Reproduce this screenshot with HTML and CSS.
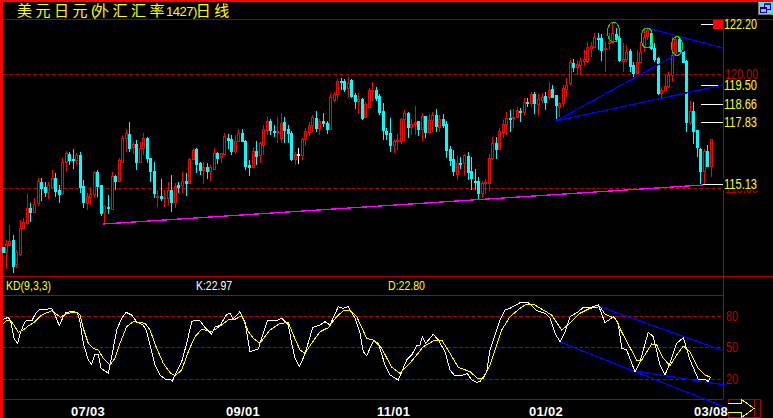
FILE: index.html
```html
<!DOCTYPE html>
<html lang="zh">
<head>
  <meta charset="UTF-8">
  <title>美元日元 日线</title>
  <link rel="stylesheet" href="styles.css">
</head>
<body>

<div class="window">
  <div class="title-bar">
    <span class="title">美元日元<span class="title-paren">(</span>外汇汇率<span class="title-num">1427)</span>日线</span>
    <svg class="restore-btn" width="15" height="13" viewBox="0 0 15 13">
      <rect x="0" y="0" width="15" height="13" fill="#00ffff"/>
      <rect x="0" y="1" width="14" height="12" fill="#6f7f3f"/>
      <rect x="1" y="1" width="13" height="11" fill="#a8b8c8"/>
      <rect x="6.5" y="1.5" width="6" height="6" fill="none" stroke="#0000c0"/>
      <rect x="6" y="1" width="7" height="2" fill="#0000c0"/>
      <rect x="2.5" y="5.5" width="6" height="5" fill="#a8b8c8" stroke="#0000c0"/>
      <rect x="2" y="5" width="7" height="2" fill="#0000c0"/>
    </svg>
  </div>

  <svg class="chart" width="770" height="398" viewBox="3 20 770 398">
    <!-- 网格 -->
    <g class="grid">
      <line class="solid" x1="3" y1="276.5" x2="773" y2="276.5"/>
      <line class="solid" x1="3" y1="295.5" x2="723" y2="295.5"/>
      <line class="solid" x1="3" y1="399.5" x2="723" y2="399.5"/>
      <line class="solid" x1="723.5" y1="20" x2="723.5" y2="399"/>
      <line class="dash" x1="3" y1="74.5" x2="723" y2="74.5"/>
      <line class="dash" x1="3" y1="188.5" x2="723" y2="188.5"/>
      <line class="dash" x1="3" y1="316.5" x2="723" y2="316.5"/>
      <line class="dash" x1="3" y1="347.5" x2="723" y2="347.5"/>
      <line class="dash" x1="3" y1="379.5" x2="723" y2="379.5"/>
    </g>

    <g id="candles"></g>

    <!-- 价位线 -->
    <rect x="713" y="20" width="10" height="9" fill="#ff0000"/>
    <g class="marks">
      <line x1="701" y1="24.5" x2="713" y2="24.5"/>
      <line x1="701" y1="85.5" x2="723" y2="85.5"/>
      <line x1="701" y1="104.5" x2="723" y2="104.5"/>
      <line x1="701" y1="122.5" x2="723" y2="122.5"/>
      <line x1="701" y1="184.5" x2="723" y2="184.5"/>
    </g>

    <line class="trend-pink" x1="103" y1="224" x2="703" y2="185"/>
    <g class="trend-blue">
      <line x1="556" y1="121" x2="685" y2="50"/>
      <line x1="556" y1="121" x2="723" y2="85"/>
      <line x1="647" y1="28" x2="723" y2="48"/>
      <line x1="560" y1="342" x2="727" y2="408"/>
      <line x1="598" y1="306" x2="724" y2="351"/>
      <line x1="635" y1="371" x2="725" y2="385"/>
    </g>
    <g class="rings">
      <ellipse cx="613.5" cy="32" rx="6" ry="10"/>
      <ellipse cx="647" cy="38" rx="6" ry="10"/>
      <ellipse cx="677" cy="46" rx="5.5" ry="9.5"/>
    </g>

    <polyline id="kd-k" class="kd-white" points=""/>
    <polyline id="kd-d" class="kd-yellow" points=""/>

    <!-- 右侧刻度, 原图字体偏窄, 用 textLength 压一下 -->
    <g class="scale">
      <text class="dim" x="725" y="79" textLength="33" lengthAdjust="spacingAndGlyphs">120.00</text>
      <text class="dim" x="725" y="193" textLength="33" lengthAdjust="spacingAndGlyphs">115.00</text>
      <rect x="723" y="179" width="47" height="11" fill="#000"/>
      <text x="724" y="29" textLength="33" lengthAdjust="spacingAndGlyphs">122.20</text>
      <text x="724" y="90" textLength="33" lengthAdjust="spacingAndGlyphs">119.50</text>
      <text x="724" y="109" textLength="33" lengthAdjust="spacingAndGlyphs">118.66</text>
      <text x="724" y="127" textLength="33" lengthAdjust="spacingAndGlyphs">117.83</text>
      <text x="724" y="189" textLength="33" lengthAdjust="spacingAndGlyphs">115.13</text>
      <text class="dim" x="726" y="321" textLength="12" lengthAdjust="spacingAndGlyphs">80</text>
      <text class="dim" x="726" y="352" textLength="12" lengthAdjust="spacingAndGlyphs">50</text>
      <text class="dim" x="726" y="384" textLength="12" lengthAdjust="spacingAndGlyphs">20</text>
    </g>

    <g class="legend">
      <text class="yellow" x="6" y="290" textLength="45" lengthAdjust="spacingAndGlyphs">KD(9,3,3)</text>
      <text class="white" x="196" y="290" textLength="36" lengthAdjust="spacingAndGlyphs">K:22.97</text>
      <text class="yellow" x="388" y="290" textLength="37" lengthAdjust="spacingAndGlyphs">D:22.80</text>
    </g>

    <g class="dates">
      <text x="71" y="416">07/03</text>
      <text x="226" y="416">09/01</text>
      <text x="377" y="416">11/01</text>
      <text x="529" y="416">01/02</text>
      <text x="694" y="416">03/08</text>
    </g>

    <!-- 右移按钮 -->
    <g class="arrow-btn">
      <rect x="728.5" y="399.5" width="32" height="18"/>
      <line x1="754.5" y1="399" x2="754.5" y2="418"/>
      <polyline points="728,403.5 741.5,403.5 741.5,399.5 754,408.5 741.5,417.5 741.5,412.5 728,412.5"/>
    </g>
  </svg>
</div>

<script src="chart.js"></script>
</body>
</html>
```

FILE: styles.css
```css
* {
  margin: 0;
  padding: 0;
  box-sizing: border-box;
}

body {
  background: #000;
  width: 773px;
  height: 418px;
  overflow: hidden;
}

.window {
  display: flex;
  flex-direction: column;
  height: 418px;
  border-top: 2px solid #ff0000;
  border-left: 3px solid #ff0000;
}

.title-bar {
  display: flex;
  justify-content: space-between;
  align-items: flex-start;
  height: 18px;
  flex: none;
  padding-left: 14px;
  border-bottom: 1px solid #a00000;
}

.title {
  color: #ffff00;
  font-family: "Noto Sans CJK SC", "DejaVu Sans", sans-serif;
  font-size: 15px;
  line-height: 15px;
  letter-spacing: 3.5px;
  white-space: nowrap;
}

.title-paren {
  font-family: "Liberation Sans", sans-serif;
  letter-spacing: -2px;
}

.title-num {
  margin-left: -2px;
  margin-right: -1px;
  font-family: "Liberation Sans", sans-serif;
  font-size: 13px;
  letter-spacing: -0.5px;
}

.restore-btn {
  display: block;
}

.chart {
  display: block;
  flex: none;
  overflow: visible;
  shape-rendering: crispEdges;
}

.chart text {
  font-family: "Liberation Sans", Arial, sans-serif;
  shape-rendering: auto;
}

.grid line {
  stroke: #b00000;
  stroke-width: 1;
}

.grid .dash {
  stroke-dasharray: 4 2;
}

.marks line {
  stroke: #ffffff;
  stroke-width: 1;
}

.trend-pink {
  stroke: #ff00ff;
  stroke-width: 1.3;
}

.trend-blue line {
  stroke: #0000ff;
  stroke-width: 1.3;
}

.rings ellipse {
  fill: none;
  stroke: #00e000;
  stroke-width: 1;
}

.kd-white,
.kd-yellow {
  fill: none;
  stroke-width: 1;
}

.kd-white {
  stroke: #ffffff;
}

.kd-yellow {
  stroke: #ffff00;
}

.scale text {
  fill: #ffff00;
  font-size: 14px;
}

.scale .dim {
  fill: #c00000;
}

.legend text {
  font-size: 13px;
}

.legend .yellow {
  fill: #ffff00;
}

.legend .white {
  fill: #ffffff;
}

.dates text {
  fill: #ffffff;
  font-size: 13px;
  font-weight: bold;
  letter-spacing: 0.3px;
}

.arrow-btn rect,
.arrow-btn line {
  fill: #000;
  stroke: #b00000;
  stroke-width: 1;
}

.arrow-btn polyline {
  fill: #000;
  stroke: #ffff00;
  stroke-width: 1;
}
```

FILE: chart.js
```js
// 蜡烛数据: [中心x, 实体上, 实体下, 影线上, 影线下]
// 数值是按3倍放大图量的, 每段有自己的原点
const CYAN = "#00ffff", RED = "#ff0000", WHITE = "#ffffff";

const segments = [
  { ox: 0, oy: 130, cyan: [
    [10,350,365,350,365],[40,330,407,315,430],[91,235,245,220,275],[124,155,173,145,212],
    [136,170,185,155,200],[166,143,182,130,200],[178,180,191,165,218],[208,72,90,65,105],
    [220,87,89,57,118],[241,75,170,65,190],[250,168,215,150,233],[292,125,168,120,200],
    [304,165,248,165,258],[325,231,232,195,252],[346,138,152,135,180],[388,12,53,-24,65],
    [409,42,95,30,120],[442,25,85,20,100],[451,85,122,85,155],[463,123,190,95,205],
    [484,198,205,148,212],[514,180,215,135,245],[535,165,170,155,190],[559,153,158,130,197],
    [589,58,102,55,130],[601,100,120,95,135],[622,110,122,100,148],[652,70,85,65,102],
    [685,25,30,12,58],[694,27,62,15,75],[727,8,33,-3,32],[736,33,107,30,120],
    [748,105,110,90,137],[769,63,77,32,105]
  ], red: [
    [19,343,365,330,418],[28,332,345,285,345],[49,365,403,360,415],[61,295,372,270,378],
    [70,277,295,265,295],[82,235,280,192,285],[103,222,245,205,250],[115,153,220,145,227],
    [145,165,185,155,206],[157,145,170,120,175],[187,97,190,85,195],[199,68,97,62,125],
    [229,75,90,70,105],[262,198,220,190,240],[271,193,200,170,225],[283,127,193,122,205],
    [313,228,245,225,283],[337,138,236,125,237],[358,91,152,85,153],[367,24,97,15,100],
    [379,10,25,-3,65],[400,42,52,35,72],[421,55,95,35,100],[430,25,55,10,75],
    [472,198,202,180,232],[493,200,204,180,232],[505,180,205,155,225],[526,167,215,160,235],
    [547,153,165,125,190],[568,88,158,85,160],[580,60,87,55,90],[610,110,120,95,163],
    [631,110,122,105,152],[643,70,116,55,120],[664,70,82,68,100],[673,18,73,10,70],
    [706,33,62,15,73],[715,10,33,-3,35],[760,63,110,50,112]
  ]},
  { ox: 260, oy: 60, cyan: [
    [30,183,210,178,225],[42,212,213,195,232],[73,186,210,170,250],[85,207,218,195,250],
    [94,220,297,213,302],[169,175,204,153,215],[190,183,190,160,200],[202,190,207,183,222],
    [244,63,64,55,90],[253,63,87,57,95],[274,60,108,57,115],[286,105,122,100,147],
    [307,118,175,113,180],[349,90,113,82,122],[358,108,155,103,165],[370,154,210,130,240],
    [379,213,222,205,240],[391,220,254,175,275],[445,160,200,155,235],[475,183,208,183,228],
    [496,168,215,168,235],[529,165,198,148,215],[550,178,196,163,205],[559,192,269,183,293],
    [571,267,300,258,318],[580,298,333,270,348],[601,310,311,290,328],[625,288,335,277,360],
    [634,333,353,292,390],[646,362,363,327,390],[655,363,398,350,418],[709,250,267,232,298],
    [751,175,176,150,215],[781,152,153,145,185],[802,125,126,113,140],[823,103,128,97,162]
  ], red: [
    [0,248,285,245,310],[9,207,255,195,285],[21,183,210,170,225],[52,212,213,170,250],
    [64,190,233,160,250],[106,283,296,275,315],[127,237,285,235,300],[136,213,238,205,257],
    [148,195,215,185,228],[157,172,195,165,215],[178,183,204,178,225],[211,111,207,103,210],
    [223,103,120,95,125],[232,63,103,57,120],[265,70,85,52,110],[295,118,122,100,162],
    [316,133,171,125,175],[328,90,140,85,145],[337,90,92,66,122],[403,243,254,238,278],
    [412,241,244,222,270],[424,178,243,173,252],[433,160,178,150,242],[454,193,200,178,225],
    [466,187,193,138,225],[487,168,208,160,243],[508,180,215,163,215],[517,166,180,156,215],
    [538,178,200,165,215],[592,310,341,288,360],[613,285,310,283,348],[667,370,398,363,415],
    [676,366,370,358,402],[688,295,368,283,392],[697,250,295,232,300],[718,214,267,205,270],
    [730,192,215,180,235],[739,175,192,156,225],[760,172,175,148,205],[772,150,172,140,175],
    [793,125,155,115,168],[814,103,128,97,140],[835,118,132,103,165]
  ], white: [
    [115,283,284,264,312]
  ]},
  { ox: 540, oy: 0, cyan: [
    [16,288,305,275,330],[37,268,290,255,295],[49,286,315,285,358],[100,190,200,178,215],
    [175,115,116,100,150],[184,113,150,103,182],[229,102,118,85,125],[238,113,180,100,185],
    [271,152,198,148,215],[280,195,218,185,230],[334,98,143,92,150],[343,143,178,130,185],
    [355,173,280,170,285],[418,118,153,112,165],[430,153,185,150,190],[439,183,365,180,395],
    [460,333,392,305,432],[472,390,441,390,471],[481,447,512,445,553],[502,453,498,435,500]
  ], red: [
    [6,290,300,280,310],[26,270,290,245,300],[58,310,320,305,350],[70,265,310,255,320],
    [79,255,268,235,290],[91,185,250,180,255],[112,193,200,180,225],[121,182,195,175,225],
    [133,178,182,150,198],[142,142,182,125,190],[154,138,143,125,170],[163,112,140,100,145],
    [196,145,146,125,215],[208,125,128,100,150],[217,98,125,70,128],[250,178,182,130,215],
    [259,155,178,135,185],[292,185,218,150,222],[301,155,185,125,190],[313,110,140,90,155],
    [322,90,107,85,120],[364,270,278,260,295],[376,258,270,225,275],[385,225,258,215,265],
    [397,165,225,110,245],[406,118,165,108,165],[451,333,365,303,375],[493,452,512,447,553],
    [514,418,497,418,530]
  ]}
];

// KD 两条线, 同样是放大图上的坐标
const kdK = [
  [0, [10,118,25,112,32,125,42,175,53,190,62,155,75,125,85,120,97,120,107,100,120,88,140,88,155,85,165,105,178,137,190,110,198,97,215,95,232,97,240,125,250,190,265,240,275,253,285,222,295,222,303,265,325,280,332,245,340,205,350,150,365,115,378,97,395,105,410,125,430,135,440,155,450,195,465,255,480,285,495,297,510,298,517,303,530,275,545,245,560,190,575,125,585,120,600,122,615,143,635,162,645,140,660,137,680,103,690,100,700,117,720,95,735,125,750,215,775,207]],
  [260, [0,190,22,123,50,122,65,115,85,135,95,190,105,235,118,260,135,222,158,142,180,135,195,125,210,135,235,80,250,85,265,80,285,115,300,160,310,215,320,227,340,183,355,190,375,255,390,285,415,300,440,240,455,225,470,197,480,195,487,170,497,190,520,163,535,180,555,215,570,270,585,288,610,285,622,280,635,300,650,307,660,305,680,275,690,210,720,120,735,90,750,85,780,68]],
  [520, [25,68,50,92,75,100,90,115,105,160,120,185,135,155,150,110,175,95,190,82,215,82,235,75,255,128,280,110,295,130,305,205,320,210,345,275,360,245,385,157,400,170,420,255,435,285,450,250,470,190,490,173,510,240,535,298,555,298,565,305,572,290]]
];
const kdD = [
  [0, [10,132,20,120,30,120,42,135,55,157,70,150,85,138,105,125,125,105,155,92,170,103,182,112,200,100,230,97,240,105,250,145,265,190,280,205,295,210,310,235,330,255,345,235,360,190,380,140,400,125,435,130,450,150,470,205,490,250,510,278,525,287,545,270,565,215,585,170,605,148,635,155,655,142,685,120,705,118,725,107,745,155,760,175,780,190]],
  [260, [30,150,60,130,85,128,100,165,120,210,135,220,155,190,180,155,205,143,230,110,250,92,270,90,290,110,320,175,340,180,365,205,395,262,420,280,445,255,470,225,490,200,520,183,545,180,570,220,595,262,630,275,655,297,670,295,690,255,725,150,750,110,780,85]],
  [520, [20,72,40,72,70,90,95,105,125,150,150,130,180,100,210,85,240,80,255,103,285,115,310,165,350,240,365,240,395,192,410,195,430,235,450,257,470,225,490,198,510,215,535,265,555,285,572,292]]
];

const NS = "http://www.w3.org/2000/svg";
const candles = document.getElementById("candles");

function addRect(x, y, w, h, fill, stroke) {
  const r = document.createElementNS(NS, "rect");
  r.setAttribute("x", x);
  r.setAttribute("y", y);
  r.setAttribute("width", w);
  r.setAttribute("height", h);
  r.setAttribute("fill", fill);
  if (stroke) r.setAttribute("stroke", stroke);
  candles.appendChild(r);
}

function drawCandle(seg, c, color, hollow) {
  const left = Math.round(seg.ox + c[0] / 3 - 1);
  const top = Math.round(seg.oy + c[1] / 3);
  const bottom = Math.max(top + 1, Math.round(seg.oy + c[2] / 3));
  const wickTop = Math.round(seg.oy + c[3] / 3);
  const wickBottom = Math.round(seg.oy + c[4] / 3);
  addRect(left + 1, wickTop, 1, wickBottom - wickTop, color);
  if (hollow) {
    addRect(left + 0.5, top + 0.5, 2, bottom - top, "#000", color);
  } else {
    addRect(left, top, 3, bottom - top + 1, color);
  }
}

segments.forEach(function (seg) {
  seg.cyan.forEach(function (c) { drawCandle(seg, c, CYAN, false); });
  seg.red.forEach(function (c) { drawCandle(seg, c, RED, true); });
  (seg.white || []).forEach(function (c) { drawCandle(seg, c, WHITE, false); });
});

function kdPoints(parts) {
  const pts = [];
  parts.forEach(function (part) {
    const list = part[1];
    for (let i = 0; i < list.length; i += 2) {
      pts.push((part[0] + list[i] / 3).toFixed(1) + "," + (280 + list[i + 1] / 3).toFixed(1));
    }
  });
  return pts.join(" ");
}

document.getElementById("kd-k").setAttribute("points", kdPoints(kdK));
document.getElementById("kd-d").setAttribute("points", kdPoints(kdD));
```
